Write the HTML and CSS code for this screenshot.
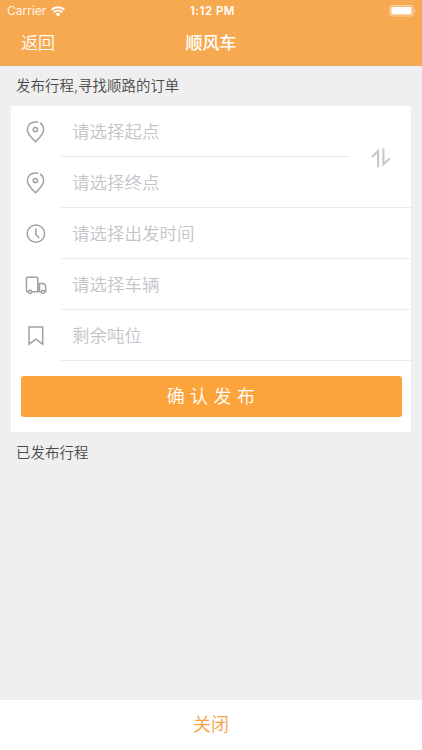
FILE: index.html
```html
<!DOCTYPE html>
<html lang="zh-CN">
<head>
<meta charset="utf-8">
<title>顺风车</title>
<link rel="stylesheet" href="styles.css">
</head>
<body>
<header class="header">
  <div class="status">
    <div class="carrier"><span>Carrier</span>
      <svg class="wifi" width="14" height="11" viewBox="0 0 14 11"><path d="M.7 3.8a9 9 0 0 1 12.6 0M2.9 6.2a5.8 5.8 0 0 1 8.2 0" fill="none" stroke="#fff" stroke-width="2"/><path d="M4.6 8a3.4 3.4 0 0 1 4.8 0L7 10.4z" fill="#fff"/></svg>
    </div>
    <time class="time">1:12 PM</time>
    <svg class="battery" width="27" height="12" viewBox="0 0 27 12"><rect x=".9" y=".6" width="23" height="10.4" rx="2.4" fill="none" stroke="#fbd3a5" stroke-width="1.1"/><rect x="2.3" y="2" width="20.2" height="7.6" rx=".8" fill="#fff"/><path d="M25.3 3.8c1.8.7 1.8 3.3 0 4z" fill="#fbd3a5"/></svg>
  </div>
  <nav class="nav"><a class="back">返回</a><h1 class="title">顺风车</h1></nav>
</header>
<main class="content">
  <h2 class="label">发布行程,寻找顺路的订单</h2>
  <section class="card">
    <div class="places">
      <div class="row">
        <svg class="icon" width="24" height="24" viewBox="0 0 24 24"><path d="M16 3c2.3 1.3 3.6 3.8 3.6 6.7 0 4.5-4.7 8.8-8.1 12.1-3.4-3.3-8.1-7.6-8.1-12.1 0-4.6 3.4-7.8 8.1-7.8 1 0 1.9.1 2.7.4"/><circle cx="11.4" cy="9.6" r="2.2"/></svg>
        <span class="field short">请选择起点</span>
      </div>
      <div class="row">
        <svg class="icon" width="24" height="24" viewBox="0 0 24 24"><path d="M16 3c2.3 1.3 3.6 3.8 3.6 6.7 0 4.5-4.7 8.8-8.1 12.1-3.4-3.3-8.1-7.6-8.1-12.1 0-4.6 3.4-7.8 8.1-7.8 1 0 1.9.1 2.7.4"/><circle cx="11.4" cy="9.6" r="2.2"/></svg>
        <span class="field">请选择终点</span>
      </div>
      <svg class="swap" width="20" height="20" viewBox="0 0 20 20"><path d="M.9 8.9 7.1 3V19.3M12.4.5V16.4l6.3-5.9" fill="none" stroke="#c8c8c8" stroke-width="2.1"/></svg>
    </div>
    <div class="row">
      <svg class="icon" width="24" height="24" viewBox="0 0 24 24"><circle cx="11.9" cy="11.6" r="8.7"/><path d="M11.8 6.6v5.6l3.2 3.7"/></svg>
      <span class="field">请选择出发时间</span>
    </div>
    <div class="row">
      <svg class="icon" width="24" height="24" viewBox="0 0 24 24"><path d="M4.2 18.8h-.7a1 1 0 0 1-1-1V5.3a1 1 0 0 1 1-1h9.3a1 1 0 0 1 1 1v13.5H8M17 18.8h-1.5v-8.3h2.6c2.4 0 3.6 1.6 3.6 3.7v4.6h-.9"/><circle cx="6.1" cy="18.8" r="1.6"/><circle cx="18.9" cy="18.8" r="1.6"/></svg>
      <span class="field">请选择车辆</span>
    </div>
    <div class="row">
      <svg class="icon" width="24" height="24" viewBox="0 0 24 24"><path d="M5 3h13.7v17.2l-6.8-5.1L5 20.2z"/></svg>
      <span class="field">剩余吨位</span>
    </div>
    <button class="submit">确认发布</button>
  </section>
  <h2 class="label published">已发布行程</h2>
</main>
<footer class="close">关闭</footer>
</body>
</html>
```
FILE: styles.css
```css
* {
  box-sizing: border-box;
}

body {
  margin: 0;
  height: 750px;
  display: flex;
  flex-direction: column;
  background: #efefef;
  font-family: Inter, "Noto Sans CJK SC", sans-serif;
  overflow: hidden;
}

.header {
  height: 66px;
  background: #f7a952;
  border-bottom: 1px solid #eaaa62;
  color: #fff;
}

.status {
  height: 22px;
  padding: 0 6px 0 7px;
  display: grid;
  grid-template-columns: 1fr auto 1fr;
  align-items: center;
  font-size: 12px;
  line-height: 22px;
}

.carrier {
  display: flex;
  align-items: center;
  gap: 5px;
  color: #fff3e3;
}

.time {
  padding-left: 2px;
  font-weight: 600;
  font-size: 11.5px;
  letter-spacing: 0.5px;
}

.battery {
  justify-self: end;
}

.nav {
  height: 43px;
  padding: 0 21px;
  display: grid;
  grid-template-columns: 1fr auto 1fr;
  align-items: center;
  line-height: 43px;
}

.back {
  font-size: 17px;
  font-weight: 350;
}

.title {
  margin: 0;
  font-size: 17px;
  font-weight: 500;
}

.content {
  flex: 1;
  padding: 0 11px;
}

.label {
  margin: 0;
  height: 40px;
  padding-left: 5px;
  font-size: 14.4px;
  font-weight: 350;
  line-height: 40px;
  letter-spacing: 0.08px;
  color: #484848;
}

.card {
  height: 326px;
  background: #fff;
}

.places {
  position: relative;
}

.row {
  height: 51px;
  padding-left: 13px;
  display: flex;
  align-items: center;
}

.icon {
  flex: none;
  margin-right: 13px;
  fill: none;
  stroke: #a0a0a0;
  stroke-width: 1.5;
}

.field {
  flex: 1;
  height: 51px;
  padding-left: 11px;
  border-bottom: 1px solid #ececec;
  font-size: 17.5px;
  font-weight: 350;
  line-height: 52px;
  color: #c4c4c9;
}

.short {
  margin-right: 61px;
}

.swap {
  position: absolute;
  right: 20px;
  top: 42px;
}

.submit {
  display: block;
  width: 381px;
  height: 41px;
  margin: 15px 0 0 10px;
  padding: 0 0 2px 4px;
  border: 0;
  border-radius: 3px;
  background: #fca43b;
  color: #fff;
  font: 350 18px/39px "Noto Sans CJK SC", sans-serif;
  letter-spacing: 5.4px;
}

.published {
  line-height: 42px;
}

.close {
  height: 50px;
  background: #fff;
  color: #f7a145;
  font-size: 18px;
  font-weight: 350;
  line-height: 49px;
  text-align: center;
}
```
